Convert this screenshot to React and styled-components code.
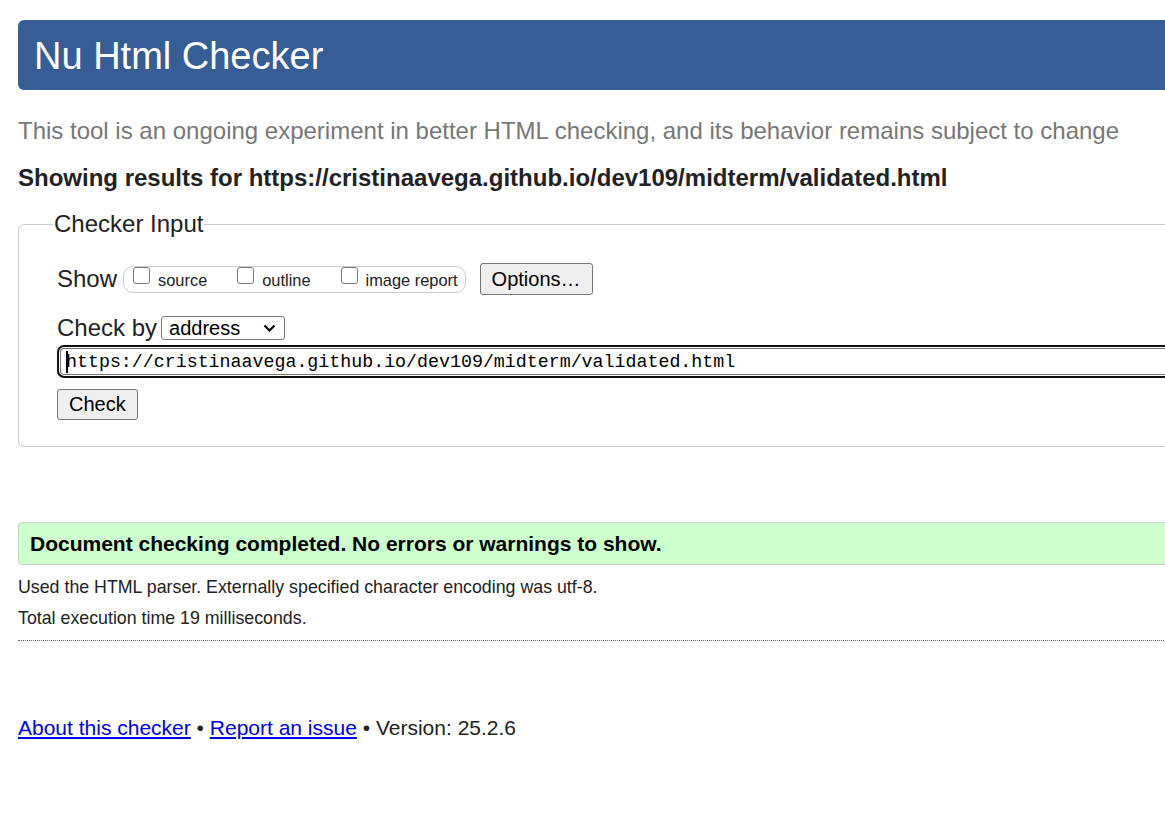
import React from 'react'
import styled, { createGlobalStyle } from 'styled-components'

const Global = createGlobalStyle`
  html, body {
    margin: 0;
    padding: 0;
    overflow: hidden;
    background: #fff;
  }
  body {
    font-family: "Liberation Sans", Arial, sans-serif;
    color: #222;
  }
`

const Page = styled.div`
  width: 1400px;
  padding: 20px 0 40px 18px;
  box-sizing: border-box;
`
const Header = styled.h1`
  margin: 0;
  height: 70px;
  line-height: 72px;
  padding-left: 16px;
  background: #365d95;
  color: #fff;
  font-size: 38px;
  font-weight: normal;
  border-radius: 6px;
`
const Intro = styled.p`
  margin: 27px 0 0;
  font-size: 24px;
  line-height: 28px;
  color: #777;
`
const Results = styled.h2`
  margin: 19px 0 0;
  font-size: 24px;
  line-height: 28px;
  font-weight: bold;
  color: #222;
`
const Fieldset = styled.fieldset`
  margin: 18px 0 0;
  padding: 0 0 26px 38px;
  border: 1px solid #ccc;
  border-radius: 6px;
  min-width: 0;
`
const Legend = styled.legend`
  margin-left: -4px;
  padding: 0 1px;
  font-size: 24px;
  line-height: 28px;
  color: #222;
`
const Row = styled.div`
  display: flex;
  align-items: center;
  margin-top: ${p => p.$top || 0}px;
  font-size: 24px;
  color: #222;
`
const Label = styled.span`
  margin-right: 6px;
`
const Group = styled.div`
  display: flex;
  align-items: flex-start;
  height: 25px;
  padding: 0 7px 0 9px;
  border: 1px solid #ccc;
  border-radius: 10px;
  gap: 30px;
`
const Option = styled.label`
  display: flex;
  align-items: flex-start;
  font-size: 16.4px;
  line-height: 18px;
  padding-top: 1px;
  gap: 8px;
`
const Box = styled.input`
  appearance: none;
  width: 17px;
  height: 17px;
  margin: 0;
  border: 1px solid #767676;
  border-radius: 3px;
  background: #fff;
  box-sizing: border-box;
  position: relative;
  top: -1px;
`
const OptText = styled.span`
  padding-top: 3px;
`
const Button = styled.button`
  font-family: "Liberation Sans", Arial, sans-serif;
  font-size: 20px;
  color: #000;
  height: ${p => p.$h}px;
  padding: 0 ${p => p.$pad}px;
  background: #efefef;
  border: 1px solid #767676;
  border-radius: 3px;
  margin-left: ${p => p.$left || 0}px;
`
const Select = styled.div`
  display: flex;
  align-items: center;
  justify-content: space-between;
  width: 124px;
  height: 24px;
  box-sizing: border-box;
  padding: 0 8px 0 7px;
  border: 1px solid #767676;
  border-radius: 3px;
  font-size: 20px;
  color: #000;
  margin-left: 4px;
`
const UrlField = styled.div`
  margin-top: 3px;
  height: 33px;
  box-sizing: border-box;
  border: 2px solid #101010;
  border-radius: 7px;
  box-shadow: inset 0 0 0 1px #fff, inset 0 0 0 2px #767676;
  padding-left: 7px;
  display: flex;
  align-items: center;
  font-family: "Liberation Mono", "DejaVu Sans Mono", monospace;
  font-size: 18.3px;
  color: #000;
  white-space: nowrap;
`
const Caret = styled.span`
  display: inline-block;
  width: 2px;
  height: 22px;
  background: #000;
  margin-right: -2px;
`
const Success = styled.p`
  margin: 75px 0 0;
  height: 43px;
  box-sizing: border-box;
  background: #ccffcc;
  border: 1px solid #ccc;
  border-radius: 4px;
  padding-left: 11px;
  font-weight: bold;
  font-size: 21px;
  line-height: 41px;
  color: #000;
`
const Note = styled.p`
  margin: ${p => p.$top}px 0 0;
  font-size: 17.8px;
  line-height: 22px;
  color: #222;
`
const Rule = styled.hr`
  margin: 11px 0 0;
  border: 0;
  border-top: 1px dotted #666;
`
const Footer = styled.p`
  margin: 74px 0 0;
  font-size: 21px;
  line-height: 26px;
  color: #222;
  a {
    color: #0000ee;
    text-decoration: underline;
  }
`

export default function App() {
  return (
    <Page>
      <Global />
      <Header>Nu Html Checker</Header>
      <Intro>This tool is an ongoing experiment in better HTML checking, and its behavior remains subject to change</Intro>
      <Results>Showing results for https://cristinaavega.github.io/dev109/midterm/validated.html</Results>
      <Fieldset>
        <Legend>Checker Input</Legend>
        <Row $top={25}>
          <Label>Show</Label>
          <Group>
            <Option><Box type="checkbox" />
              <OptText>source</OptText></Option>
            <Option><Box type="checkbox" />
              <OptText>outline</OptText></Option>
            <Option><Box type="checkbox" />
              <OptText>image report</OptText></Option>
          </Group>
          <Button $h={32} $pad={11} $left={14}>Options…</Button>
        </Row>
        <Row $top={19}>
          <span>Check by</span>
          <Select>
            <span>address</span>
            <svg width="13" height="9" viewBox="0 0 13 9">
              <path d="M1.5 1.5 L6.5 6.5 L11.5 1.5" fill="none" stroke="#000" strokeWidth="2.2" />
            </svg>
          </Select>
        </Row>
        <UrlField>
          <Caret />https://cristinaavega.github.io/dev109/midterm/validated.html
        </UrlField>
        <Row $top={11}>
          <Button $h={31} $pad={11}>Check</Button>
        </Row>
      </Fieldset>
      <Success>Document checking completed. No errors or warnings to show.</Success>
      <Note $top={11}>Used the HTML parser. Externally specified character encoding was utf-8.</Note>
      <Note $top={9}>Total execution time 19 milliseconds.</Note>
      <Rule />
      <Footer>
        <a href="#about">About this checker</a> • <a href="#report">Report an issue</a> • Version: 25.2.6
      </Footer>
    </Page>
  )
}
